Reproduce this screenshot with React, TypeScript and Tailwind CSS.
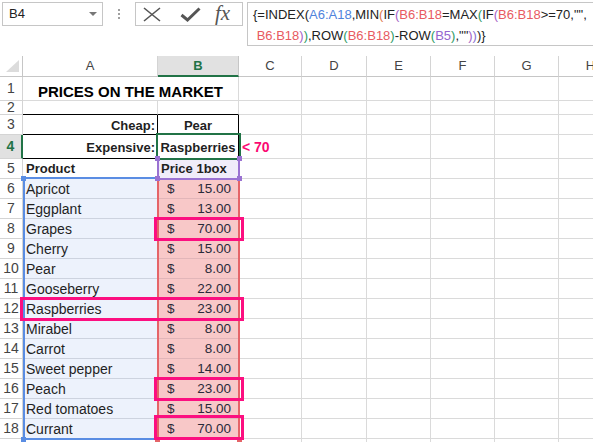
import React from "react"

const COLS = [135, 81, 63, 65, 64, 64, 64, 64]
const LETTERS = ["A", "B", "C", "D", "E", "F", "G", "H"]

const products: [string, string][] = [
  ["Apricot", "15.00"],
  ["Eggplant", "13.00"],
  ["Grapes", "70.00"],
  ["Cherry", "15.00"],
  ["Pear", "8.00"],
  ["Gooseberry", "22.00"],
  ["Raspberries", "23.00"],
  ["Mirabel", "8.00"],
  ["Carrot", "8.00"],
  ["Sweet pepper", "14.00"],
  ["Peach", "23.00"],
  ["Red tomatoes", "15.00"],
  ["Currant", "70.00"],
]

// highlighted answers (pink frames)
const frames = [
  { left: 154, top: 217, w: 90, h: 24 },
  { left: 20, top: 297, w: 224, h: 24 },
  { left: 154, top: 377, w: 90, h: 24 },
  { left: 154, top: 415, w: 90, h: 25 },
]

function RowHead({ n, h, active }: { n?: number; h: number; active?: boolean }) {
  return (
    <div
      style={{ height: h }}
      className={
        active
          ? "w-[23px] shrink-0 flex items-center justify-center border-b border-[#d4d4d4] border-r-2 border-r-[#217346] bg-[#e1e1e1] text-[14px] font-bold text-[#217346]"
          : "w-[23px] shrink-0 flex items-center justify-center border-b border-r border-[#d4d4d4] bg-white text-[14px] text-[#444]"
      }
    >
      {n}
    </div>
  )
}

function Empty({ from, h }: { from: number; h: number }) {
  return (
    <>
      {COLS.slice(from).map((w, i) => (
        <div key={i} style={{ width: w, height: h }} className="shrink-0 border-r border-b border-[#dadada]" />
      ))}
    </>
  )
}

function Formula() {
  const blue = "text-[#4f83dc]"
  const red = "text-[#e85a61]"
  const purple = "text-[#9466cf]"
  const orange = "text-[#e0784a]"
  const vio = "text-[#a45fc6]"
  const green = "text-[#2b9a63]"
  return (
    <div className="text-[13px] leading-[21px] text-[#222] pl-[5px] pt-[1px] whitespace-pre">
      <div>
        {"{=INDEX("}
        <span className={blue}>A6:A18</span>,MIN<span className={orange}>(</span>IF<span className={vio}>(</span>
        <span className={red}>B6:B18</span>=MAX<span className={green}>(</span>IF<span className={vio}>(</span>
        <span className={red}>B6:B18</span>
        {'>=70,"",'}
      </div>
      <div>
        {" "}
        <span className={red}>B6:B18</span>
        <span className={vio}>)</span>
        <span className={green}>)</span>,ROW<span className={green}>(</span>
        <span className={red}>B6:B18</span>
        <span className={green}>)</span>-ROW<span className={green}>(</span>
        <span className={purple}>B5</span>
        <span className={green}>)</span>
        {',""'}
        <span className={vio}>)</span>
        <span className="text-[#8a6fd0]">)</span>
        {")}"}
      </div>
    </div>
  )
}

export default function App() {
  return (
    <div className="relative w-[593px] h-[442px] overflow-hidden bg-white font-['Liberation_Sans',Arial,sans-serif] text-[#1f1f1f]">
      {/* formula bar */}
      <div className="h-[56px] flex items-start pt-[2px] pl-[2px]">
        <div className="w-[101px] h-[24px] shrink-0 border border-[#c6c6c6] flex items-center pl-[6px] pr-[5px] text-[13px] text-[#222]">
          <span>B4</span>
          <span className="ml-auto w-0 h-0 border-l-[4px] border-r-[4px] border-t-[4px] border-l-transparent border-r-transparent border-t-[#777]" />
        </div>
        <div className="w-[32px] h-[24px] shrink-0 flex flex-col items-center justify-center gap-[2px]">
          <span className="w-[2px] h-[2px] bg-[#a0a0a0]" />
          <span className="w-[2px] h-[2px] bg-[#a0a0a0]" />
          <span className="w-[2px] h-[2px] bg-[#a0a0a0]" />
        </div>
        <div className="w-[108px] h-[24px] shrink-0 border border-[#c6c6c6] flex items-center pl-[7px]">
          <svg width="18" height="15" viewBox="0 0 18 15">
            <path d="M1 1 L17 14 M17 1 L1 14" stroke="#555" strokeWidth="1.6" fill="none" />
          </svg>
          <svg width="21" height="15" viewBox="0 0 21 15" className="ml-[19px]">
            <path d="M1.5 8 L7.5 13 L19.5 1.5" stroke="#555" strokeWidth="3" fill="none" />
          </svg>
          <span className="ml-[14px] font-['Liberation_Serif',serif] italic text-[21px] leading-none text-[#555] -mt-[2px]">fx</span>
        </div>
        <div className="ml-[4px] h-[44px] flex-1 border border-r-0 border-[#c6c6c6]">
          <Formula />
        </div>
      </div>

      {/* column headers */}
      <div className="flex h-[21px]">
        <div className="w-[23px] shrink-0 border-r border-b border-[#c6c6c6] relative">
          <svg width="14" height="13" viewBox="0 0 14 13" className="absolute left-[6px] top-[4px]">
            <path d="M13 0 L13 12 L0 12 Z" fill="#dcdcdc" />
          </svg>
        </div>
        {COLS.map((w, i) =>
          i === 1 ? (
            <div key={i} style={{ width: w }} className="shrink-0 flex items-center justify-center bg-[#e1e1e1] border-r border-[#c6c6c6] border-b-2 border-b-[#217346] text-[13px] font-bold text-[#217346]">
              {LETTERS[i]}
            </div>
          ) : (
            <div key={i} style={{ width: w }} className="shrink-0 flex items-center justify-center border-r border-b border-[#d4d4d4] border-b-[#c6c6c6] text-[13px] text-[#444]">
              {LETTERS[i]}
            </div>
          )
        )}
      </div>

      {/* row 1 */}
      <div className="flex">
        <RowHead n={1} h={24} />
        <div className="w-[216px] h-[24px] shrink-0 border-r border-b border-[#dadada] flex items-end justify-center text-[15px] font-bold text-black leading-[17px]">
          PRICES ON THE MARKET
        </div>
        <Empty from={2} h={24} />
      </div>

      {/* row 2 */}
      <div className="flex">
        <RowHead n={2} h={14} />
        <div className="w-[135px] h-[14px] shrink-0 border-r border-[#dadada] border-b border-b-black" />
        <div className="w-[81px] h-[14px] shrink-0 border-r border-[#dadada] border-b border-b-black" />
        <Empty from={2} h={14} />
      </div>

      {/* row 3 */}
      <div className="flex">
        <RowHead n={3} h={20} />
        <div className="w-[135px] h-[20px] shrink-0 border-r border-b border-black flex items-end justify-end pr-[2px] pb-[1px] text-[13px] font-bold leading-[15px]">
          Cheap:
        </div>
        <div className="w-[81px] h-[20px] shrink-0 border-r border-b border-black flex items-end justify-center pb-[1px] text-[13px] font-bold leading-[15px]">
          Pear
        </div>
        <Empty from={2} h={20} />
      </div>

      {/* row 4 */}
      <div className="flex">
        <RowHead n={4} h={24} active />
        <div className="w-[135px] h-[24px] shrink-0 border-r border-b border-black flex items-end justify-end pr-[2px] pb-[3px] text-[13px] font-bold leading-[15px]">
          Expensive:
        </div>
        <div className="w-[81px] h-[24px] shrink-0 border-r border-b border-black flex items-end justify-center pb-[3px] text-[13px] font-bold leading-[15px]">
          Raspberries
        </div>
        <div className="w-[63px] h-[24px] shrink-0 border-r border-b border-[#dadada] flex items-end pl-[3px] pb-[3px] text-[14px] font-bold leading-[16px] text-[#fb0a72]">
          {"< 70"}
        </div>
        <Empty from={3} h={24} />
      </div>

      {/* row 5 */}
      <div className="flex">
        <RowHead n={5} h={20} />
        <div className="w-[135px] h-[20px] shrink-0 border-r border-b border-[#dadada] flex items-end pl-[3px] pb-[1px] text-[13px] font-bold leading-[16px]">
          Product
        </div>
        <div className="w-[81px] h-[20px] shrink-0 border-r border-b border-[#dadada] bg-[#f0ecfa] flex items-end pl-[3px] pb-[1px] text-[13px] font-bold leading-[16px]">
          Price 1box
        </div>
        <Empty from={2} h={20} />
      </div>

      {/* data rows */}
      {products.map(([name, price], i) => (
        <div key={name} className="flex">
          <RowHead n={i + 6} h={20} />
          <div className="w-[135px] h-[20px] shrink-0 border-r border-b border-[#dadada] border-b-[#cdd3df] bg-[#edf2fc] flex items-end pl-[3px] pb-[1px] text-[14px] leading-[16px]">
            {name}
          </div>
          <div className="w-[81px] h-[20px] shrink-0 border-r border-b border-[#dadada] border-b-[#e2b6b9] bg-[#f8c8c8] flex items-end justify-between pl-[9px] pr-[7px] pb-[1px] text-[13.5px] leading-[16px] text-[#2a2a3a]">
            <span>$</span>
            <span>{price}</span>
          </div>
          <Empty from={2} h={20} />
        </div>
      ))}

      {/* start of row 19, cut off by the window */}
      <div className="flex">
        <RowHead h={20} />
        <Empty from={0} h={20} />
      </div>

      {/* range outlines drawn by Excel over the sheet */}
      <div className="absolute left-[23px] top-[177px] w-[136px] h-[263px] border-2 border-[#5a8de3]" />
      <div className="absolute left-[157px] top-[178px] w-[83px] h-[262px] border-2 border-[#e56468]" />
      <div className="absolute left-[157px] top-[158px] w-[83px] h-[22px] border-2 border-[#9a72d2]" />
      <div className="absolute left-[156px] top-[133px] w-[85px] h-[27px] border-2 border-[#217346]" />

      {/* corner handles */}
      <div className="absolute left-[21px] top-[176px] w-[5px] h-[5px] bg-[#5a8de3]" />
      <div className="absolute left-[21px] top-[437px] w-[5px] h-[5px] bg-[#5a8de3]" />
      <div className="absolute left-[155px] top-[437px] w-[5px] h-[5px] bg-[#e56468]" />
      <div className="absolute left-[237px] top-[437px] w-[5px] h-[5px] bg-[#e56468]" />
      <div className="absolute left-[155px] top-[156px] w-[5px] h-[5px] bg-[#9a72d2]" />
      <div className="absolute left-[237px] top-[156px] w-[5px] h-[5px] bg-[#9a72d2]" />
      <div className="absolute left-[155px] top-[176px] w-[5px] h-[5px] bg-[#9a72d2]" />
      <div className="absolute left-[237px] top-[176px] w-[5px] h-[5px] bg-[#9a72d2]" />

      {frames.map((f, i) => (
        <div
          key={i}
          style={{ left: f.left, top: f.top, width: f.w, height: f.h }}
          className="absolute border-[3px] border-[#fc0f80]"
        />
      ))}
    </div>
  )
}
